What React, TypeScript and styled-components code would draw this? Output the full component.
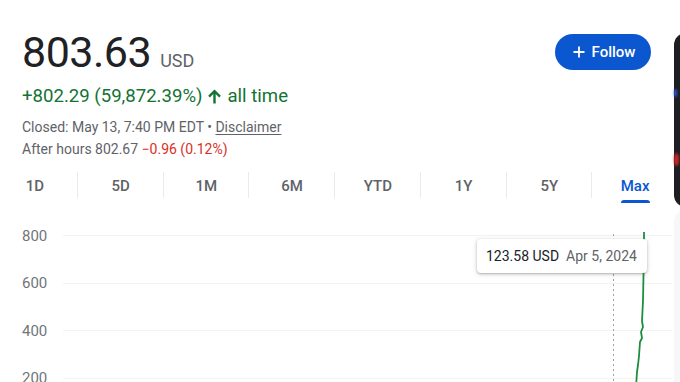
import styled, { createGlobalStyle } from "styled-components"

const Global = createGlobalStyle`
    html, body {
        margin: 0;
        padding: 0;
        background: #fff;
        overflow: hidden;
        font-family: Roboto, "Liberation Sans", Arial, sans-serif;
    }
`

const Page = styled.div`
    display: flex;
    width: 680px;
    height: 382px;
    padding-left: 22px;
    box-sizing: border-box;
    overflow: hidden;
`

const Main = styled.div`
    width: 629px;
    flex-shrink: 0;
    display: flex;
    flex-direction: column;
`

const Header = styled.div`
    display: flex;
    justify-content: space-between;
    align-items: flex-start;
    padding-top: 31px;
`

const PriceLine = styled.div`
    display: flex;
    align-items: baseline;
    color: #202124;
`

const Price = styled.span`
    font-size: 43px;
    line-height: 43px;
    letter-spacing: -0.5px;
`

const Currency = styled.span`
    font-size: 18px;
    color: #5f6368;
    margin-left: 9px;
`

const Change = styled.div`
    display: flex;
    align-items: center;
    margin-top: 10px;
    font-size: 18.6px;
    line-height: 24px;
    color: #137333;

    svg {
        margin: 0 6px 0 6px;
    }
`

const Meta = styled.div<{ first?: boolean }>`
    margin-top: ${({ first }) => first ? "8px" : "0"};
    font-size: 14px;
    line-height: 22px;
    color: #5f6368;
`

const Red = styled.span`
    color: #d93025;
`

const Link = styled.span`
    color: #5f6368;
    text-decoration: underline;
    text-underline-offset: 2px;
`

const FollowButton = styled.button`
    margin-top: 3px;
    width: 96px;
    height: 36px;
    border: none;
    border-radius: 18px;
    background: #0b57d0;
    color: #fff;
    font-family: inherit;
    font-size: 15px;
    font-weight: 500;
    display: flex;
    align-items: center;
    justify-content: center;
    gap: 7px;
    padding: 0 0 0 2px;
`

const Tabs = styled.div`
    display: grid;
    grid-template-columns: repeat(8, 1fr);
    margin: 10px -27px 0 -30px;
    height: 34px;
`

const Tab = styled.div<{ active?: boolean; last?: boolean }>`
    position: relative;
    display: flex;
    flex-direction: column;
    align-items: center;
    padding-top: 6px;
    font-size: 15px;
    font-weight: 500;
    line-height: 20px;
    color: ${({ active }) => active ? "#0b57d0" : "#5f6368"};

    &::after {
        content: "";
        display: ${({ last }) => last ? "none" : "block"};
        position: absolute;
        right: 0;
        top: 2px;
        height: 26px;
        width: 1px;
        background: #e8eaed;
    }
`

const Indicator = styled.div`
    margin-top: 4px;
    width: 100%;
    height: 3px;
    border-radius: 3px 3px 0 0;
    background: #0b57d0;
`

const TabLabel = styled.div`
    display: flex;
    flex-direction: column;
    align-items: stretch;
`

const Chart = styled.div`
    position: relative;
    margin-right: -21px;
    padding-top: 9px;
`

const Row = styled.div`
    display: flex;
    align-items: center;
    height: 47.5px;
`

const AxisLabel = styled.div`
    width: 41px;
    flex-shrink: 0;
    font-size: 15px;
    color: #70757a;
`

const GridLine = styled.div`
    flex: 1;
    height: 1px;
    background: #f1f3f4;
`

const Plot = styled.svg`
    position: absolute;
    left: 0;
    top: 0;
    width: 650px;
    height: 200px;
    overflow: visible;
`

const Tooltip = styled.div`
    position: absolute;
    left: 455px;
    top: 36px;
    width: 170px;
    height: 34px;
    box-sizing: border-box;
    background: #fff;
    border-radius: 4px;
    box-shadow: 0 1px 2px rgba(60, 64, 67, 0.3), 0 1px 4px 1px rgba(60, 64, 67, 0.15);
    display: flex;
    align-items: center;
    gap: 7px;
    padding-left: 9px;
    font-size: 14px;
`

const TipValue = styled.span`
    color: #202124;
`

const TipDate = styled.span`
    color: #5f6368;
`

const Side = styled.div`
    margin-left: 23px;
    width: 200px;
    flex-shrink: 0;
    display: flex;
    flex-direction: column;
`

const DarkCard = styled.div`
    position: relative;
    margin-top: 33px;
    height: 174px;
    border-radius: 12px;
    background: #1d1e22;
`

const Spot = styled.div<{ top: number; color: string; size: number }>`
    position: absolute;
    left: 0;
    top: ${({ top }) => top}px;
    width: ${({ size }) => size}px;
    height: ${({ size }) => size * 2.5}px;
    border-radius: 50%;
    background: ${({ color }) => color};
    filter: blur(1px);
`

const GreyCard = styled.div`
    margin-top: 3px;
    flex: 1;
    border-radius: 12px 12px 0 0;
    background: #f6f7f8;
`

const ranges = ["1D", "5D", "1M", "6M", "YTD", "1Y", "5Y", "Max"]
const levels = ["800", "600", "400", "200"]

const linePoints = "622,29 622,48 621,98 620,118 621,124 619,129 620,135 618,139 617,153 616,162 615,169 614,184"

export default function App() {
    return (
        <>
            <Global />
            <Page>
                <Main>
                    <Header>
                        <div>
                            <PriceLine>
                                <Price>803.63</Price>
                                <Currency>USD</Currency>
                            </PriceLine>
                            <Change>
                                +802.29 (59,872.39%)
                                <svg width="13" height="15" viewBox="0 0 13 15" fill="#137333">
                                    <path d="M6.5 0.5L12.8 6.8L11.2 8.4L7.7 4.9V14.5H5.3V4.9L1.8 8.4L0.2 6.8Z" />
                                </svg>
                                all time
                            </Change>
                            <Meta first>Closed: May 13, 7:40 PM EDT • <Link>Disclaimer</Link></Meta>
                            <Meta>After hours 802.67 <Red>−0.96 (0.12%)</Red></Meta>
                        </div>
                        <FollowButton>
                            <svg width="12" height="12" viewBox="0 0 12 12">
                                <path d="M6 0.5v11M0.5 6h11" stroke="#fff" strokeWidth="1.8" />
                            </svg>
                            Follow
                        </FollowButton>
                    </Header>

                    <Tabs>
                        {ranges.map((r, i) => (
                            <Tab key={r} active={r === "Max"} last={i === ranges.length - 1}>
                                <TabLabel>
                                    {r}
                                    {r === "Max" && <Indicator />}
                                </TabLabel>
                            </Tab>
                        ))}
                    </Tabs>

                    <Chart>
                        {levels.map((l) => (
                            <Row key={l}>
                                <AxisLabel>{l}</AxisLabel>
                                <GridLine />
                            </Row>
                        ))}
                        <Plot viewBox="0 0 650 200">
                            <line x1="591.5" y1="31" x2="591.5" y2="200" stroke="#9aa0a6" strokeWidth="1" strokeDasharray="2 3" />
                            <polyline points={linePoints} fill="none" stroke="#1e8e3e" strokeWidth="1.8" strokeLinejoin="round" />
                        </Plot>
                        <Tooltip>
                            <TipValue>123.58 USD</TipValue>
                            <TipDate>Apr 5, 2024</TipDate>
                        </Tooltip>
                    </Chart>
                </Main>

                <Side>
                    <DarkCard>
                        <Spot top={56} color="#2a5bd7" size={3} />
                        <Spot top={120} color="#c62828" size={5} />
                    </DarkCard>
                    <GreyCard />
                </Side>
            </Page>
        </>
    )
}
